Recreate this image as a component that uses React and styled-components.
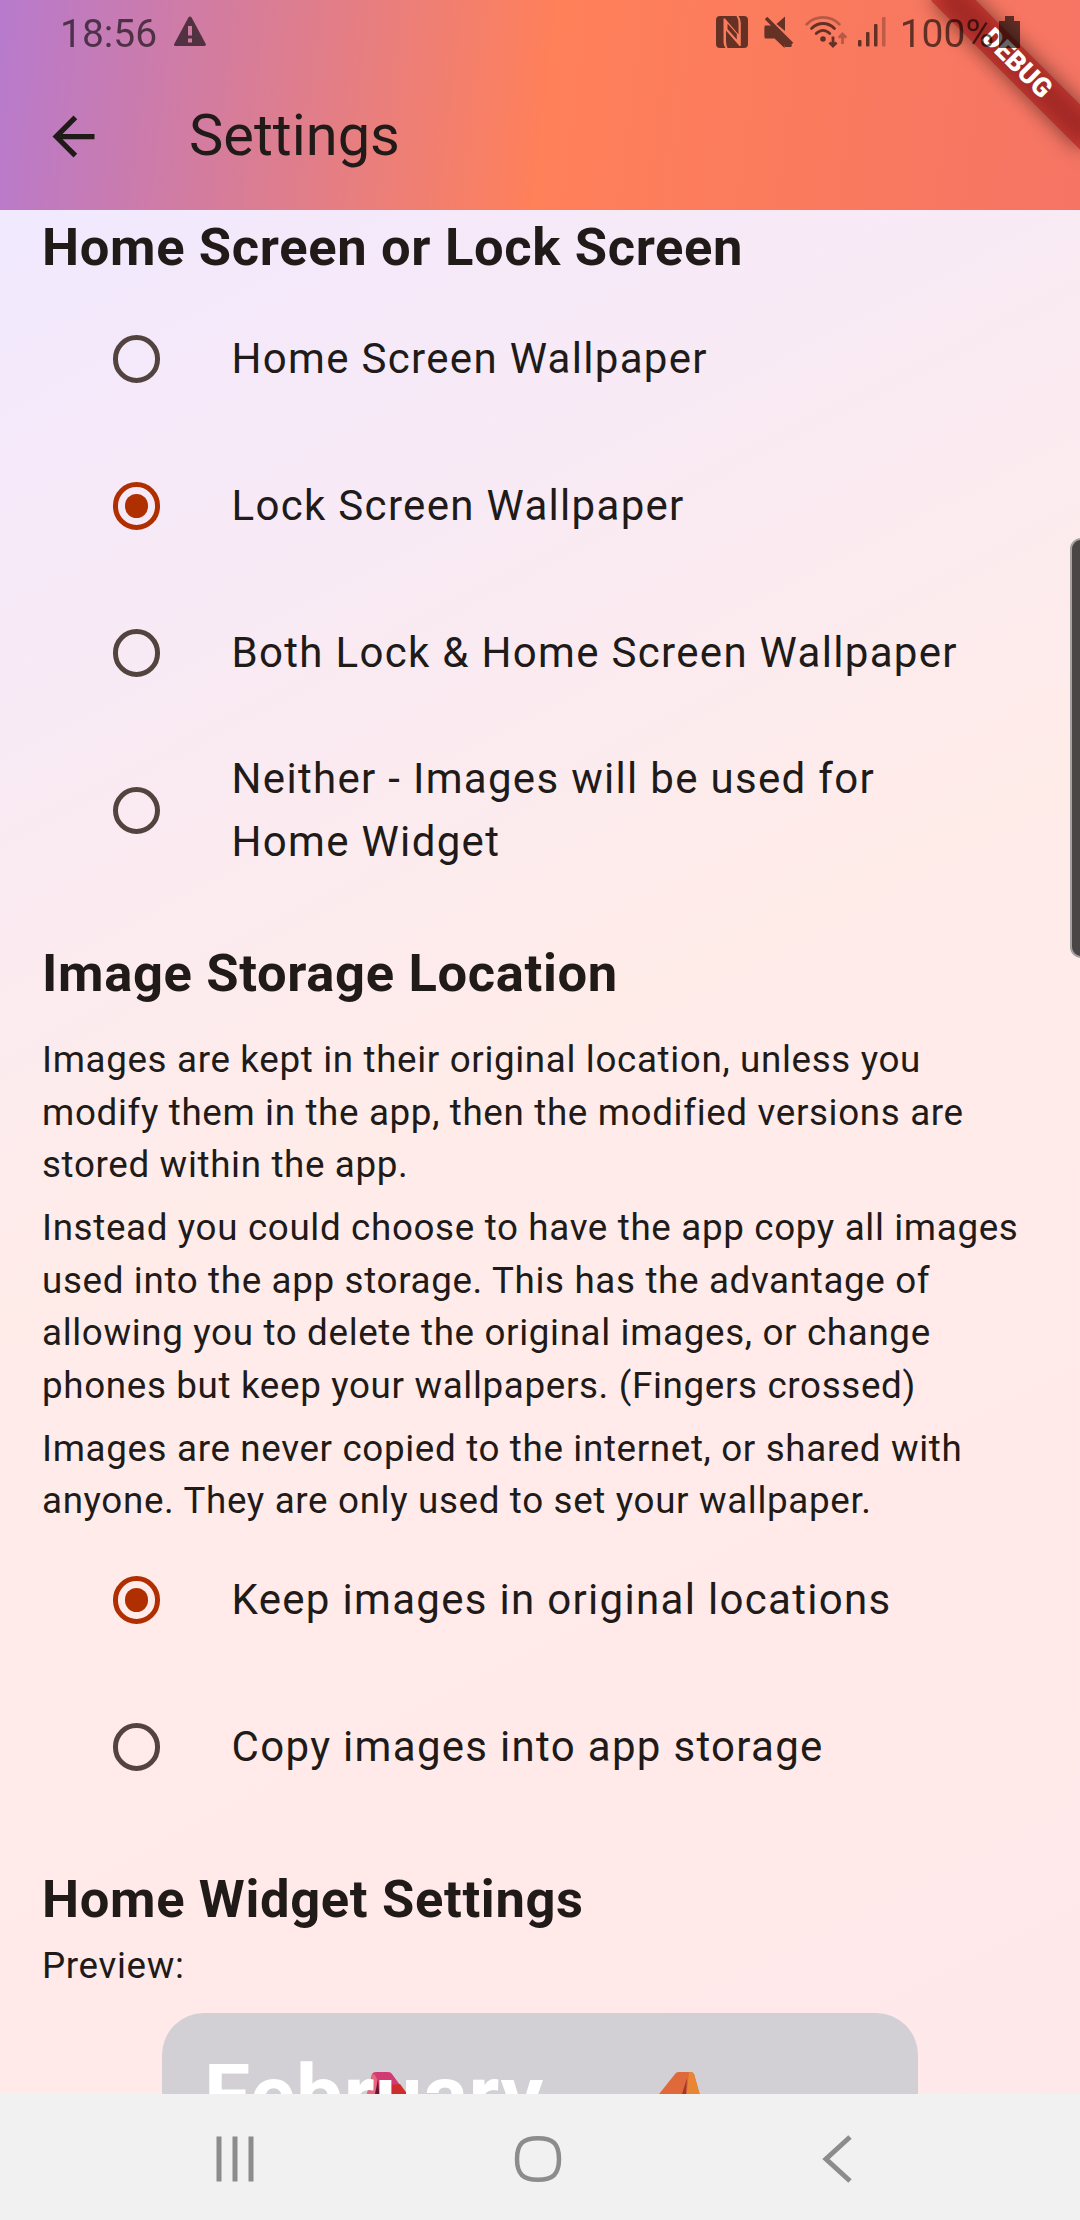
import React, { useState } from "react";
import styled, { createGlobalStyle } from "styled-components";

const GlobalStyle = createGlobalStyle`
  * { box-sizing: border-box; }
  body { margin: 0; overflow: hidden; font-family: Roboto, sans-serif; }
`;

const INK = "#201a18";

const Screen = styled.div`
  position: relative;
  width: 1080px;
  height: 2220px;
  display: flex;
  flex-direction: column;
  overflow: hidden;
  color: ${INK};
`;

const Header = styled.header`
  height: 210px;
  flex: none;
  display: flex;
  flex-direction: column;
  background: linear-gradient(96.8deg, #b77acd 0%, #ff8059 50.7%, #f57464 100%);
`;

const StatusBar = styled.div`
  position: relative;
  z-index: 2;
  height: 63px;
  display: flex;
  align-items: center;
  justify-content: space-between;
  padding: 0 60px 0 60px;
  color: #000;
  opacity: 0.6;
`;

const StatusGroup = styled.div`
  display: flex;
  align-items: center;
`;

const StatusText = styled.span`
  height: 63px;
  padding-top: 3px;
  margin-left: ${(p) => p.$gap || 0}px;
  font-size: 39px;
  line-height: 62px;
`;

const StatusIcon = styled.svg`
  display: block;
  flex: none;
  margin-left: ${(p) => p.$gap}px;
`;

const Toolbar = styled.div`
  height: 147px;
  display: flex;
  align-items: center;
  padding-left: 42px;
  gap: 84px;
`;

const BackButton = styled.button`
  width: 63px;
  height: 63px;
  padding: 0;
  border: 0;
  background: none;
  color: inherit;
`;

const Title = styled.h1`
  margin: 0 0 2px;
  font-size: 57.75px;
  font-weight: 400;
  line-height: 73.5px;
`;

const Ribbon = styled.div`
  position: absolute;
  z-index: 1;
  left: 975px;
  top: 73.5px;
  width: 210px;
  height: 31.5px;
  transform-origin: 105px -73.5px;
  transform: rotate(45deg);
  color: #fff;
  font-size: 26.8px;
  font-weight: 900;
  line-height: 31.5px;
  text-align: center;

  &::before,
  &::after {
    content: "";
    position: absolute;
    inset: 0;
  }

  &::before {
    z-index: -2;
    background: rgba(0, 0, 0, 0.5);
    filter: blur(10px);
  }

  &::after {
    z-index: -1;
    background: rgba(183, 28, 28, 0.627);
  }
`;

const Body = styled.main`
  height: 1884px;
  flex: none;
  overflow: hidden;
  padding: 0 42px;
  background: linear-gradient(
      152.7deg,
      #efe9ff 0%,
      #f2e9fd 11%,
      #f5e9fa 17%,
      #ffece9 50%,
      #ffe8ea 100%
    )
    0 -210px / 1080px 2094px no-repeat;
`;

const Heading = styled.h2`
  margin: ${(p) => p.$top || 0}px 0 0;
  font-size: 52.5px;
  font-weight: 700;
  line-height: 75px;
  letter-spacing: 0.656px;
`;

const Copy = styled.div`
  display: flex;
  flex-direction: column;
  gap: 10.5px;
  padding-top: ${(p) => p.$top || 0}px;
`;

const Paragraph = styled.p`
  margin: 0;
  font-size: 36.75px;
  line-height: 52.5px;
  letter-spacing: 0.656px;
`;

const Options = styled.div`
  display: flex;
  flex-direction: column;
  margin-top: ${(p) => p.$shift || 0}px;
`;

const OptionRow = styled.label`
  min-height: 147px;
  display: flex;
  align-items: center;
  padding: 21px 42px 21px 70.8px;
  gap: 71.5px;
  font-size: 42px;
  line-height: 63px;
  letter-spacing: 1.3125px;
`;

const RadioRing = styled.span`
  flex: none;
  width: 47.25px;
  height: 47.25px;
  margin-top: 1px;
  border: 5.25px solid ${(p) => (p.$on ? "#b02f00" : "#53433f")};
  border-radius: 50%;
  display: flex;
  align-items: center;
  justify-content: center;

  &::after {
    content: "";
    width: 23.6px;
    height: 23.6px;
    border-radius: 50%;
    background: ${(p) => (p.$on ? "#b02f00" : "transparent")};
  }
`;

const WidgetCard = styled.section`
  position: relative;
  width: 756px;
  height: 378px;
  margin: 20px auto 0;
  border-radius: 42px;
  background: #d2d0d5;
  overflow: hidden;
`;

const CardArt = styled.svg`
  position: absolute;
  left: 0;
  top: 0;
`;

const Month = styled.div`
  position: relative;
  padding: 30px 0 0 42px;
  color: #fff;
  font-size: 84px;
  font-weight: 700;
  line-height: 105px;
  letter-spacing: 0.656px;
`;

const EdgeHandle = styled.div`
  position: absolute;
  right: -12px;
  top: 538px;
  width: 22px;
  height: 420px;
  border: 2px solid #a5a1a1;
  border-radius: 12px;
  background: #4b4646;
`;

const NavBar = styled.nav`
  height: 126px;
  flex: none;
  display: flex;
  align-items: center;
  justify-content: space-between;
  padding: 4px 217px 0 210px;
  background: #f1f1f1;
`;

const NavIcon = styled.svg`
  display: block;
  fill: none;
  stroke: #8c8c8c;
`;

function RadioGroup({ options, initial, shift }) {
  const [selected, setSelected] = useState(initial);
  return (
    <Options role="radiogroup" $shift={shift}>
      {options.map((text, i) => (
        <OptionRow key={text} onClick={() => setSelected(i)}>
          <RadioRing $on={i === selected} role="radio" aria-checked={i === selected} />
          <span>{text}</span>
        </OptionRow>
      ))}
    </Options>
  );
}

function Status() {
  return (
    <StatusBar>
      <StatusGroup>
        <StatusText>18:56</StatusText>
        <StatusIcon $gap={16} width="34" height="32" viewBox="0 0 34 32">
          <path
            fillRule="evenodd"
            d="M15.4 1.4Q17 -.6 18.6 1.4L32.8 28Q33.400 30 31.600 30H2.400Q.6 30 1.200 28ZM15 10V19.500H19V10ZM15 22.500V26.500H19V22.500Z"
          />
        </StatusIcon>
      </StatusGroup>
      <StatusGroup>
        <StatusIcon $gap={0} width="32" height="32" viewBox="0 0 32 32">
          <path
            fillRule="evenodd"
            d="M4 0H20.500Q22.500 3 22.500 8V18.500L9 2.500H7.500V26Q7.500 29.500 9.500 32H4Q0 32 0 28V4Q0 0 4 0ZM22.500 0H28Q32 0 32 4V28Q32 32 28 32H11.500Q10 29 10 25V14.500L23.500 30H24.800V7Q24.800 3 22.500 0ZM11.500 7.500L20.800 18V23.500L11.500 13Z"
          />
        </StatusIcon>
        <StatusIcon $gap={16} width="30" height="32" viewBox="0 0 30 32">
          <path d="M1.500 9.500H8L28 29.500L27 31H21V28L20.500 32L10.500 22.500H2Q.4 22.500.4 21V11Q.4 9.500 1.500 9.500ZM12.500 8L21 .5V15Z" />
          <path d="M2 2L28 28" stroke="#000" strokeWidth="3.500" />
        </StatusIcon>
        <StatusIcon $gap={11} width="42" height="32" viewBox="0 0 42 32">
          <g fill="none" stroke="#000" strokeWidth="2.800" strokeLinecap="round">
            <path d="M1.700 8.200Q8.500 1.400 18 1.400T34.300 8.200" opacity=".45" />
            <path d="M6.500 12.500Q11.500 7.500 18 7.500T29.500 12.500" />
            <path d="M11.200 17.500Q14.500 14.300 18 14.300T24.800 17.500" />
            <path d="M28 20.500V29.500M24.500 26.500L28 30L31.500 26.500" strokeLinecap="butt" />
            <path d="M37.500 28V18.500M33.800 21.800L37.500 18L41.200 21.800" strokeLinecap="butt" opacity=".45" />
          </g>
          <circle cx="18" cy="23" r="2.800" />
        </StatusIcon>
        <StatusIcon $gap={11} width="28" height="30" viewBox="0 0 28 30">
          <rect x="0" y="23" width="3.500" height="6.500" rx="1" />
          <rect x="8" y="15" width="3.500" height="14.500" rx="1" />
          <rect x="16" y="7" width="3.500" height="22.500" rx="1" />
          <rect x="24" y="0" width="3.500" height="29.500" rx="1" opacity=".4" />
        </StatusIcon>
        <StatusText $gap={14}>100%</StatusText>
        <StatusIcon $gap={5} width="21" height="32" viewBox="0 0 21 32">
          <path d="M6 0H15V5H21V32H0V5H6Z" />
        </StatusIcon>
      </StatusGroup>
    </StatusBar>
  );
}

export default function App() {
  return (
    <Screen>
      <GlobalStyle />
      <Header>
        <Status />
        <Toolbar>
          <BackButton aria-label="Back">
            <svg width="63" height="63" viewBox="0 0 24 24" fill="currentColor">
              <path d="M20 11H7.830l5.590-5.590L12 4l-8 8 8 8 1.410-1.410L7.830 13H20v-2z" />
            </svg>
          </BackButton>
          <Title>Settings</Title>
        </Toolbar>
      </Header>
      <Ribbon>DEBUG</Ribbon>

      <Body>
        <Heading>Home Screen or Lock Screen</Heading>
        <RadioGroup
          initial={1}
          options={[
            "Home Screen Wallpaper",
            "Lock Screen Wallpaper",
            "Both Lock & Home Screen Wallpaper",
            "Neither - Images will be used for Home Widget",
          ]}
        />
        <Heading $top={42}>Image Storage Location</Heading>
        <Copy $top={23.2}>
          <Paragraph>
            Images are kept in their original location, unless you modify them in the app, then the
            modified versions are stored within the app.
          </Paragraph>
          <Paragraph>
            Instead you could choose to have the app copy all images used into the app storage. This
            has the advantage of allowing you to delete the original images, or change phones but
            keep your wallpapers. (Fingers crossed)
          </Paragraph>
          <Paragraph>
            Images are never copied to the internet, or shared with anyone. They are only used to
            set your wallpaper.
          </Paragraph>
        </Copy>
        <RadioGroup
          initial={0}
          shift={-1.8}
          options={["Keep images in original locations", "Copy images into app storage"]}
        />
        <Heading $top={42}>Home Widget Settings</Heading>
        <Copy $top={3.2}>
          <Paragraph>Preview:</Paragraph>
        </Copy>
        <WidgetCard>
          <CardArt width="756" height="120" viewBox="0 0 756 120">
            <path d="M210 61Q211 59 214 59H226Q229 59 230 61L254 94H202Z" fill="#d13a72" />
            <path d="M229 72L238 71L262 104H225Z" fill="#cf2d2c" />
            <path d="M210 62Q212 59 215 66L214 100H200Z" fill="#e5687c" />
            <path d="M216 67L218 90H211Z" fill="#6b1530" />
            <path d="M513 61Q514 59 517 59H528Q531 59 532 61L543 100H482Z" fill="#e0693c" />
            <path d="M527 59H528Q531 59 532 61L543 100H523Z" fill="#e98635" />
            <path d="M525 65L523 100H514Z" fill="#9c3b2c" />
          </CardArt>
          <Month>February</Month>
        </WidgetCard>
      </Body>

      <NavBar>
        <NavIcon width="50" height="50" viewBox="0 0 50 50" strokeWidth="5">
          <path d="M9 2.500V47.500M25 2.500V47.500M41 2.500V47.500" />
        </NavIcon>
        <NavIcon width="50" height="50" viewBox="-1 0 50 50" strokeWidth="4.500">
          <path d="M25 4.200C40 4.200 46 10 46 25S40 45.800 25 45.800S4 40 4 25S10 4.200 25 4.200Z" />
        </NavIcon>
        <NavIcon width="50" height="50" viewBox="0 0 50 50" strokeWidth="5">
          <path d="M37 3L13 25L37 47" />
        </NavIcon>
      </NavBar>
      <EdgeHandle />
    </Screen>
  );
}
